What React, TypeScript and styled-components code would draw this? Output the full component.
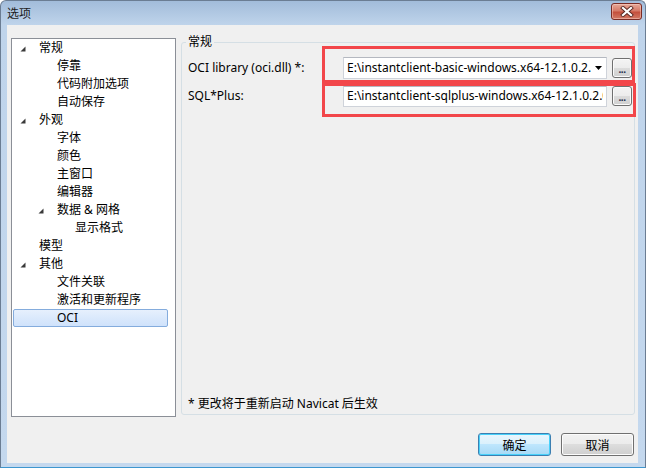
import React from "react";
import styled, { createGlobalStyle } from "styled-components";

const Global = createGlobalStyle`
  html, body { margin: 0; padding: 0; background: #ffffff; }
  body {
    font-family: "Noto Sans", "Noto Sans CJK SC", sans-serif;
    font-size: 12px;
    color: #000;
  }
`;

const Window = styled.div`
  position: relative;
  width: 646px;
  height: 468px;
  box-sizing: border-box;
  border: 1px solid #6b7d93;
  border-bottom-color: #3d96cf;
  border-radius: 6px 6px 0 0;
  background: linear-gradient(#a2bcda 0px, #bfd4eb 24px, #c4d8ee 100%);
  display: flex;
  flex-direction: column;
  overflow: hidden;
`;

const TitleBar = styled.div`
  height: 24px;
  flex: none;
  display: flex;
  align-items: center;
  justify-content: space-between;
  padding: 0 3px 0 6px;
`;

const TitleText = styled.span`
  font-family: "Noto Sans CJK SC", sans-serif;
  font-size: 12px;
  color: #1c1c1c;
  line-height: 16px;
`;

const CloseButton = styled.div`
  width: 31px;
  height: 17px;
  box-sizing: border-box;
  margin-bottom: 3px;
  border: 1px solid #7a2b24;
  border-radius: 3px;
  background: linear-gradient(#e6a898 0%, #d67a68 45%, #c4503d 55%, #d27a66 100%);
  box-shadow: inset 0 0 0 1px rgba(255, 220, 210, 0.45);
  display: flex;
  align-items: center;
  justify-content: center;
`;

const Body = styled.div`
  flex: 1;
  margin: 0 7px 4px 6px;
  background: #f0f0f0;
  padding: 10px 3px 6px 4px;
  display: flex;
  flex-direction: column;
  min-height: 0;
`;

const Main = styled.div`
  display: flex;
  align-items: flex-start;
  gap: 5px;
  height: 382px;
`;

const Tree = styled.div`
  margin-top: 3px;
  width: 165px;
  height: 379px;
  flex: none;
  box-sizing: border-box;
  border: 1px solid #8b8f97;
  background: #ffffff;
  font-family: "Noto Sans", "Noto Sans CJK SC", sans-serif;
`;

const Row = styled.div<{ $level: number; $selected?: boolean }>`
  height: 18px;
  box-sizing: border-box;
  margin: 0 7px 0 1px;
  padding-left: ${(p) => 6 + p.$level * 18}px;
  display: flex;
  align-items: center;
  border: 1px solid ${(p) => (p.$selected ? "#84acdd" : "transparent")};
  border-radius: 2px;
  background: ${(p) =>
    p.$selected ? "linear-gradient(#e6f0fd, #cfe2fb)" : "transparent"};
  line-height: 16px;
  white-space: nowrap;
`;

const ArrowSlot = styled.span`
  width: 19px;
  flex: none;
  display: flex;
  align-items: center;
  padding-top: 2px;
`;

const GroupBox = styled.fieldset`
  flex: 1;
  min-width: 0;
  margin: 0;
  height: 380px;
  box-sizing: border-box;
  padding: 8px 6px 2px 6px;
  border: 1px solid #d5dfe5;
  border-radius: 3px;
  display: flex;
  flex-direction: column;
`;

const Legend = styled.legend`
  padding: 0 2px;
  margin-left: -2px;
  line-height: 14px;
  font-size: 12px;
`;

const FormGrid = styled.div`
  display: grid;
  grid-template-columns: 150px 264px 20px;
  grid-auto-rows: 22px;
  column-gap: 5px;
  row-gap: 6px;
  align-items: center;
`;

const Label = styled.span`
  line-height: 22px;
  white-space: nowrap;
`;

const Field = styled.div<{ $h: number }>`
  height: ${(p) => p.$h}px;
  box-sizing: border-box;
  border: 1px solid #cfd3da;
  border-top-color: #b4b8c0;
  background: #ffffff;
  display: flex;
  align-items: center;
  padding: 0 3px;
  overflow: hidden;
`;

const FieldText = styled.span`
  flex: 1;
  min-width: 0;
  overflow: hidden;
  white-space: nowrap;
  line-height: 16px;
`;

const DropArrow = styled.span`
  flex: none;
  margin: 0 1px 0 4px;
  display: flex;
`;

const BrowseButton = styled.div`
  width: 20px;
  height: 20px;
  box-sizing: border-box;
  border: 1px solid #707070;
  border-radius: 3px;
  background: linear-gradient(#f4f4f4 0%, #ececec 50%, #dcdcdc 50%, #cfcfcf 100%);
  box-shadow: inset 0 0 0 1px #fbfbfb;
  display: flex;
  align-items: flex-end;
  justify-content: center;
  padding-bottom: 4px;
  font-size: 10px;
  font-weight: bold;
  line-height: 8px;
  color: #1d2b4c;
  letter-spacing: -0.5px;
`;

const Footnote = styled.div`
  margin-top: auto;
  line-height: 16px;
  white-space: nowrap;
`;

const ButtonRow = styled.div`
  display: flex;
  justify-content: flex-end;
  gap: 10px;
  margin-top: 16px;
  margin-right: 1px;
`;

const DialogButton = styled.div<{ $primary?: boolean }>`
  width: 73px;
  height: 23px;
  box-sizing: border-box;
  border: 1px solid ${(p) => (p.$primary ? "#3c7fb1" : "#707070")};
  border-radius: 3px;
  background: ${(p) =>
    p.$primary
      ? "linear-gradient(#eaf6fd 0%, #d9f0fc 50%, #bee6fd 50%, #a7d9f5 100%)"
      : "linear-gradient(#f2f2f2 0%, #ebebeb 50%, #dddddd 50%, #cfcfcf 100%)"};
  box-shadow: inset 0 0 0 1px ${(p) => (p.$primary ? "#48d1fa" : "#fcfcfc")};
  display: flex;
  align-items: center;
  justify-content: center;
  font-family: "Noto Sans CJK SC", sans-serif;
  font-size: 12px;
  line-height: 16px;
`;

const Annotation = styled.div<{ $x: number; $y: number; $w: number; $h: number }>`
  position: absolute;
  left: ${(p) => p.$x}px;
  top: ${(p) => p.$y}px;
  width: ${(p) => p.$w}px;
  height: ${(p) => p.$h}px;
  box-sizing: border-box;
  border: 3px solid #f2464a;
  pointer-events: none;
`;

const Expander = () => (
  <svg width="6" height="6" viewBox="0 0 6 6">
    <polygon points="5.5,0.5 5.5,5.5 0.5,5.5" fill="#3a3a3a" />
  </svg>
);

type Node = { label: string; level: number; expanded?: boolean; selected?: boolean };

const nodes: Node[] = [
  { label: "常规", level: 0, expanded: true },
  { label: "停靠", level: 1 },
  { label: "代码附加选项", level: 1 },
  { label: "自动保存", level: 1 },
  { label: "外观", level: 0, expanded: true },
  { label: "字体", level: 1 },
  { label: "颜色", level: 1 },
  { label: "主窗口", level: 1 },
  { label: "编辑器", level: 1 },
  { label: "数据 & 网格", level: 1, expanded: true },
  { label: "显示格式", level: 2 },
  { label: "模型", level: 0 },
  { label: "其他", level: 0, expanded: true },
  { label: "文件关联", level: 1 },
  { label: "激活和更新程序", level: 1 },
  { label: "OCI", level: 1, selected: true },
];

export default function App() {
  return (
    <>
      <Global />
      <Window>
        <TitleBar>
          <TitleText>选项</TitleText>
          <CloseButton>
            <svg width="14" height="11" viewBox="0 0 14 11">
              <path d="M3 2 L11 9 M11 2 L3 9" stroke="#5a2a24" strokeWidth="4" strokeLinecap="square" />
              <path d="M3 2 L11 9 M11 2 L3 9" stroke="#ffffff" strokeWidth="2.2" strokeLinecap="square" />
            </svg>
          </CloseButton>
        </TitleBar>
        <Body>
          <Main>
            <Tree>
              {nodes.map((n) => (
                <Row key={n.label} $level={n.level} $selected={n.selected}>
                  <ArrowSlot>{n.expanded ? <Expander /> : null}</ArrowSlot>
                  <span>{n.label}</span>
                </Row>
              ))}
            </Tree>
            <GroupBox>
              <Legend>常规</Legend>
              <FormGrid>
                <Label>OCI library (oci.dll) *:</Label>
                <Field $h={22}>
                  <FieldText>E:\instantclient-basic-windows.x64-12.1.0.2.0\instantclient_12_1\oci.dll</FieldText>
                  <DropArrow>
                    <svg width="7" height="4" viewBox="0 0 7 4">
                      <polygon points="0,0 7,0 3.5,4" fill="#000" />
                    </svg>
                  </DropArrow>
                </Field>
                <BrowseButton>...</BrowseButton>
                <Label>SQL*Plus:</Label>
                <Field $h={21}>
                  <FieldText>E:\instantclient-sqlplus-windows.x64-12.1.0.2.0\instantclient_12_1\sqlplus.exe</FieldText>
                </Field>
                <BrowseButton>...</BrowseButton>
              </FormGrid>
              <Footnote>* 更改将于重新启动 Navicat 后生效</Footnote>
            </GroupBox>
          </Main>
          <ButtonRow>
            <DialogButton $primary>确定</DialogButton>
            <DialogButton>取消</DialogButton>
          </ButtonRow>
        </Body>
        <Annotation $x={321} $y={45} $w={313} $h={37} />
        <Annotation $x={321} $y={82} $w={314} $h={34} />
      </Window>
    </>
  );
}
